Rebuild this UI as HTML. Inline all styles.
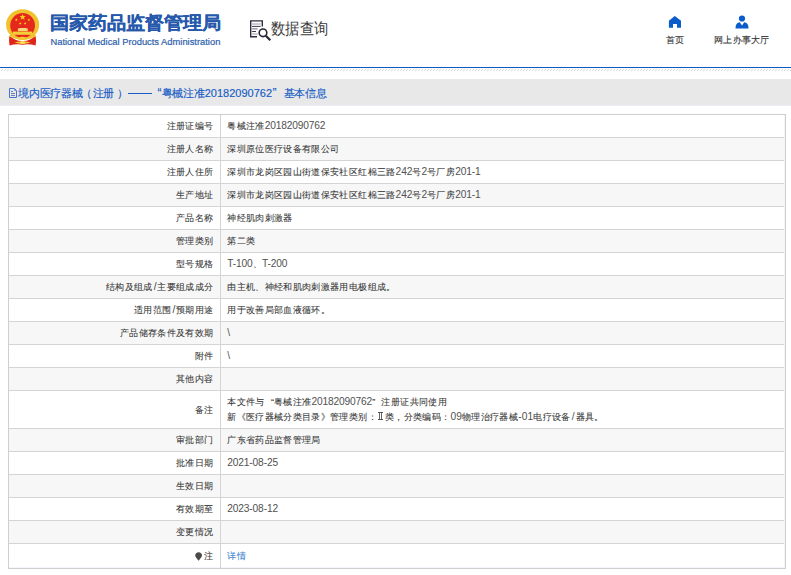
<!DOCTYPE html>
<html><head><meta charset="utf-8">
<style>
html,body{margin:0;padding:0;background:#fff;width:791px;height:575px;overflow:hidden;position:relative;font-family:"Liberation Sans",sans-serif;}
.abs{position:absolute;}
.emblem{position:absolute;left:0;top:0;}
.t1{position:absolute;left:50px;top:9px;font-size:19px;font-weight:bold;color:#2659ab;-webkit-text-stroke:0.2px #2659ab;white-space:nowrap;line-height:27px;transform:scale(1,0.94);transform-origin:0 22px}
.t2{position:absolute;left:50.5px;top:36px;font-size:9.35px;color:#2d5eac;white-space:nowrap;line-height:12px;-webkit-text-stroke:0.2px #2d5eac}
.sq{position:absolute;left:249px;top:19px;}
.t3{position:absolute;left:270.5px;top:17.5px;font-size:16px;color:#3c3c3c;white-space:nowrap;line-height:22px;transform:scale(0.895,1);transform-origin:0 0}
.nav{position:absolute;font-size:9px;color:#333;white-space:nowrap;line-height:12px;letter-spacing:0.3px;-webkit-text-stroke:0.1px #333}
.blue{position:absolute;left:0;top:67px;width:791px;height:1px;background:#0a5bc2}
.hatch{position:absolute;left:0;top:69px;width:791px;height:2px;background:repeating-linear-gradient(135deg,#e4e4e4 0 1px,#fff 1px 3px)}
.bar{position:absolute;left:0;top:79px;width:791px;height:26px;background:#e8e8e8;border-bottom:1px solid #eceef4}
.crumb{position:absolute;left:18px;top:83px;font-size:11px;color:#175cc6;white-space:nowrap;line-height:20px;-webkit-text-stroke:0.15px #175cc6}
.crumb .c{-webkit-text-stroke:0.15px #175cc6}
.crumb .c{font-size:11px;letter-spacing:-0.2px;color:#175cc6}
.doc{position:absolute;left:9px;top:88px;}
.tbl{position:absolute;left:8px;top:114px;width:778px;height:455px;box-sizing:border-box;border:1px solid #cfcfcf}
.row{position:absolute;left:9px;width:775px}
.hl{position:absolute;left:9px;width:775px;height:1px;background:#d4d4d4}
.vl{position:absolute;left:220px;top:115px;width:1px;height:453px;background:#d4d4d4}
.lab{position:absolute;left:9px;width:204.5px;text-align:right;font-size:10.2px;letter-spacing:-0.15px;color:#444;white-space:nowrap}
.val{position:absolute;left:227.3px;font-size:10.2px;letter-spacing:-0.15px;color:#505050;white-space:nowrap}
.c{font-size:9px;letter-spacing:0.35px;color:#333;-webkit-text-stroke:0.07px #444}
.link .c{color:#2d8cf0}
.link{color:#2d8cf0}
.sl{padding:0 0.9px 0 1.1px}
.r2{display:inline-block;width:5px;height:6px;border-top:1px solid #555;border-bottom:1px solid #555;background:linear-gradient(90deg,transparent 1px,#666 1px 2px,transparent 2px 3px,#666 3px 4px,transparent 4px);margin:0 2.2px 0 1px;vertical-align:0}
.ql{display:inline-block;width:9.35px;text-align:right;letter-spacing:0}
.qr{display:inline-block;width:9.35px;text-align:left;letter-spacing:0}
.pin{display:inline-block;width:6px;height:6px;background:#444;border-radius:50% 50% 50% 0;transform:rotate(-45deg);margin-right:2px;vertical-align:0px}
</style></head><body>
<svg class="emblem" width="46" height="50" viewBox="0 0 46 50">
<ellipse cx="22.6" cy="24.7" rx="16.5" ry="15.4" fill="#f0c22e"/>
<circle cx="22.6" cy="25.4" r="12.4" fill="#e4291c"/>
<path d="M9.4 35.8 Q8.6 41 9.6 45.6 Q16 43.6 22.6 44.8 Q29 43.6 35.6 45.6 Q36.6 41 35.6 35.8 Q29 41.5 22.6 41 Q16 41.5 9.4 35.8 Z" fill="#e0261b"/>
<path d="M22.65 13.9 L23.45 16.1 L25.8 16.15 L23.95 17.55 L24.6 19.8 L22.65 18.5 L20.7 19.8 L21.35 17.55 L19.5 16.15 L21.85 16.1 Z" fill="#f7d21a"/>
<path d="M16.4 18.3 L16.85 19.3 L17.8 19.35 L17.1 20 L17.3 21 L16.4 20.45 L15.5 21 L15.7 20 L15 19.35 L15.95 19.3 Z" fill="#f7d21a"/>
<path d="M28.9 18.4 L29.35 19.4 L30.3 19.45 L29.6 20.1 L29.8 21.1 L28.9 20.55 L28 21.1 L28.2 20.1 L27.5 19.45 L28.45 19.4 Z" fill="#f7d21a"/>
<path d="M20.2 21.9 L20.65 22.9 L21.6 22.95 L20.9 23.6 L21.1 24.6 L20.2 24.05 L19.3 24.6 L19.5 23.6 L18.8 22.95 L19.75 22.9 Z" fill="#f7d21a"/>
<path d="M25.1 21.9 L25.55 22.9 L26.5 22.95 L25.8 23.6 L26 24.6 L25.1 24.05 L24.2 24.6 L24.4 23.6 L23.7 22.95 L24.65 22.9 Z" fill="#f7d21a"/>
<path d="M17.9 28.4 H27.7 V31.2 H17.9 Z" fill="#f7d770"/>
<path d="M19.5 28 H26 V28.8 H19.5 Z" fill="#f9e6a0"/>
<path d="M13 31.6 H32.2 V34.8 H13 Z" fill="#f5cf3a"/>
<path d="M9.6 35.6 Q16 39.5 22.6 37.8 Q29 39.5 35.6 35.6" stroke="#f0c22e" stroke-width="1.8" fill="none"/>
<path d="M14.5 42.6 Q22.6 40 30.6 42.6 Q22.6 45.2 14.5 42.6 Z" fill="#f0c22e"/>
<ellipse cx="22.6" cy="42.6" rx="2.6" ry="1.5" fill="#f7da60"/>
<path d="M19 37.6 Q22.6 35.8 25.5 37.6 Q22.6 39.2 19 37.6 Z" fill="#f5cf3a"/>
</svg>
<div class="t1">国家药品监督管理局</div>
<div class="t2">National Medical Products Administration</div>
<svg class="sq" width="24" height="24" viewBox="0 0 24 24">
<path d="M13.3 7.5 V1.85 H1.7 V17.8 H8" stroke="#2e2e40" stroke-width="1.4" fill="none"/>
<path d="M3.1 5 H11.6" stroke="#9a9aa4" stroke-width="1"/>
<path d="M3.1 7.4 H11.6" stroke="#3a3a4a" stroke-width="1"/>
<path d="M3.1 9.9 H8.7" stroke="#6a6a78" stroke-width="1"/>
<path d="M3.1 12.5 H7" stroke="#3a3a4a" stroke-width="1"/>
<path d="M3.1 15 H8.7" stroke="#9a9aa4" stroke-width="1"/>
<circle cx="14" cy="13.8" r="3.8" stroke="#262636" stroke-width="1.6" fill="#fff"/>
<path d="M16.8 16.8 L21.3 21.3" stroke="#262636" stroke-width="2.2" stroke-linecap="butt"/>
</svg>
<div class="t3">数据查询</div>
<svg class="abs" style="left:668px;top:15px" width="14" height="13" viewBox="0 0 14 13">
<path d="M6.75 1 L13 5.8 V12.7 H9 V8.9 H5 V12.7 H0.9 V5.8 Z" fill="#0b5ccb"/>
</svg>
<div class="nav" style="left:666px;top:34px">首页</div>
<svg class="abs" style="left:735px;top:15px" width="14" height="14" viewBox="0 0 14 14">
<circle cx="7" cy="3.5" r="3.1" fill="#0b5ccb"/>
<path d="M0.5 13.4 Q0.5 7.6 4.8 7.3 L7 10.4 L9.2 7.3 Q13.5 7.6 13.5 13.4 Z" fill="#0b5ccb"/>
</svg>
<div class="nav" style="left:714px;top:34px">网上办事大厅</div>
<div class="blue"></div>
<svg class="abs" style="left:0;top:69px" width="791" height="2"><defs><pattern id="hp" width="3" height="2" patternUnits="userSpaceOnUse"><rect x="2" y="0" width="1" height="1" fill="#d9d9d9"/><rect x="1" y="1" width="1" height="1" fill="#d9d9d9"/></pattern></defs><rect width="791" height="2" fill="url(#hp)"/></svg>
<div class="bar"></div>
<svg class="abs" style="left:8px;top:87px" width="10" height="12" viewBox="0 0 10 12">
<path d="M1.5 1.5 H6.5 L8.5 3.5 V10.5 H1.5 Z" stroke="#4474d0" stroke-width="1" fill="none"/>
<path d="M6.5 1.5 V3.5 H8.5" stroke="#6a9ad8" stroke-width="1" fill="none"/>
<path d="M3 4.5 H5 M3 6.5 H7 M3 8.5 H7" stroke="#6d78c8" stroke-width="1"/>
</svg>
<div class="crumb" style="left:18px"><span class="c">境内医疗器械</span></div>
<div class="crumb" style="left:80.5px"><span class="c">（</span></div>
<div class="crumb" style="left:92.5px"><span class="c">注册</span></div>
<div class="crumb" style="left:117px"><span class="c">）</span></div>
<div class="abs" style="left:128px;top:93px;width:23.5px;height:1.1px;background:#175cc6"></div>
<div class="crumb" style="left:157.5px;font-size:12px">“</div>
<div class="crumb" style="left:161.5px"><span class="c">粤械注准</span>20182090762</div>
<div class="crumb" style="left:272.5px;font-size:12px">”</div>
<div class="crumb" style="left:283.5px"><span class="c">基本信息</span></div>
<div class="tbl"></div>
<div class="row" style="top:115px;height:22px;background:#fff"></div>
<div class="lab" style="top:114px;height:23px;line-height:23px"><span class="c">注册证编号</span></div>
<div class="val" style="top:114px;height:23px;line-height:23px"><span class="c">粤械注准</span>20182090762</div>
<div class="row" style="top:138px;height:22px;background:#f7f7f7"></div>
<div class="hl" style="top:137px"></div>
<div class="lab" style="top:137px;height:23px;line-height:23px"><span class="c">注册人名称</span></div>
<div class="val" style="top:137px;height:23px;line-height:23px"><span class="c">深圳原位医疗设备有限公司</span></div>
<div class="row" style="top:161px;height:22px;background:#fff"></div>
<div class="hl" style="top:160px"></div>
<div class="lab" style="top:160px;height:23px;line-height:23px"><span class="c">注册人住所</span></div>
<div class="val" style="top:160px;height:23px;line-height:23px"><span class="c">深圳市龙岗区园山街道保安社区红棉三路</span>242<span class="c">号</span>2<span class="c">号厂房</span>201-1</div>
<div class="row" style="top:184px;height:22px;background:#f7f7f7"></div>
<div class="hl" style="top:183px"></div>
<div class="lab" style="top:183px;height:23px;line-height:23px"><span class="c">生产地址</span></div>
<div class="val" style="top:183px;height:23px;line-height:23px"><span class="c">深圳市龙岗区园山街道保安社区红棉三路</span>242<span class="c">号</span>2<span class="c">号厂房</span>201-1</div>
<div class="row" style="top:207px;height:22px;background:#fff"></div>
<div class="hl" style="top:206px"></div>
<div class="lab" style="top:206px;height:23px;line-height:23px"><span class="c">产品名称</span></div>
<div class="val" style="top:206px;height:23px;line-height:23px"><span class="c">神经肌肉刺激器</span></div>
<div class="row" style="top:230px;height:22px;background:#f7f7f7"></div>
<div class="hl" style="top:229px"></div>
<div class="lab" style="top:229px;height:23px;line-height:23px"><span class="c">管理类别</span></div>
<div class="val" style="top:229px;height:23px;line-height:23px"><span class="c">第二类</span></div>
<div class="row" style="top:253px;height:22px;background:#fff"></div>
<div class="hl" style="top:252px"></div>
<div class="lab" style="top:252px;height:23px;line-height:23px"><span class="c">型号规格</span></div>
<div class="val" style="top:252px;height:23px;line-height:23px">T-100<span class="c">、</span>T-200</div>
<div class="row" style="top:276px;height:22px;background:#f7f7f7"></div>
<div class="hl" style="top:275px"></div>
<div class="lab" style="top:275px;height:23px;line-height:23px"><span class="c">结构及组成</span><span class="sl">/</span><span class="c">主要组成成分</span></div>
<div class="val" style="top:275px;height:23px;line-height:23px"><span class="c">由主机、神经和肌肉刺激器用电极组成。</span></div>
<div class="row" style="top:299px;height:22px;background:#fff"></div>
<div class="hl" style="top:298px"></div>
<div class="lab" style="top:298px;height:23px;line-height:23px"><span class="c">适用范围</span><span class="sl">/</span><span class="c">预期用途</span></div>
<div class="val" style="top:298px;height:23px;line-height:23px"><span class="c">用于改善局部血液循环。</span></div>
<div class="row" style="top:322px;height:22px;background:#f7f7f7"></div>
<div class="hl" style="top:321px"></div>
<div class="lab" style="top:321px;height:23px;line-height:23px"><span class="c">产品储存条件及有效期</span></div>
<div class="val" style="top:321px;height:23px;line-height:23px">\</div>
<div class="row" style="top:345px;height:22px;background:#fff"></div>
<div class="hl" style="top:344px"></div>
<div class="lab" style="top:344px;height:23px;line-height:23px"><span class="c">附件</span></div>
<div class="val" style="top:344px;height:23px;line-height:23px">\</div>
<div class="row" style="top:368px;height:22px;background:#f7f7f7"></div>
<div class="hl" style="top:367px"></div>
<div class="lab" style="top:367px;height:23px;line-height:23px"><span class="c">其他内容</span></div>
<div class="val" style="top:367px;height:23px;line-height:23px"></div>
<div class="row" style="top:391px;height:37px;background:#fff"></div>
<div class="hl" style="top:390px"></div>
<div class="lab" style="top:391px;height:38px;line-height:38px"><span class="c">备注</span></div>
<div class="val" style="top:393.5px;line-height:15px"><span class="c">本文件与<span class="ql">“</span>粤械注准</span>20182090762<span class="c"><span class="qr">”</span>注册证共同使用</span></div>
<div class="val" style="top:409px;line-height:15px;letter-spacing:0.1px"><span class="c">新《医疗器械分类目录》管理类别：</span><span class="r2"></span><span class="c">类，分类编码：</span>09<span class="c">物理治疗器械</span>-01<span class="c">电疗设备</span><span class="sl">/</span><span class="c">器具。</span></div>
<div class="row" style="top:429px;height:22px;background:#f7f7f7"></div>
<div class="hl" style="top:428px"></div>
<div class="lab" style="top:428px;height:23px;line-height:23px"><span class="c">审批部门</span></div>
<div class="val" style="top:428px;height:23px;line-height:23px"><span class="c">广东省药品监督管理局</span></div>
<div class="row" style="top:452px;height:22px;background:#fff"></div>
<div class="hl" style="top:451px"></div>
<div class="lab" style="top:451px;height:23px;line-height:23px"><span class="c">批准日期</span></div>
<div class="val" style="top:451px;height:23px;line-height:23px">2021-08-25</div>
<div class="row" style="top:475px;height:22px;background:#f7f7f7"></div>
<div class="hl" style="top:474px"></div>
<div class="lab" style="top:474px;height:23px;line-height:23px"><span class="c">生效日期</span></div>
<div class="val" style="top:474px;height:23px;line-height:23px"></div>
<div class="row" style="top:498px;height:22px;background:#fff"></div>
<div class="hl" style="top:497px"></div>
<div class="lab" style="top:497px;height:23px;line-height:23px"><span class="c">有效期至</span></div>
<div class="val" style="top:497px;height:23px;line-height:23px">2023-08-12</div>
<div class="row" style="top:521px;height:22px;background:#f7f7f7"></div>
<div class="hl" style="top:520px"></div>
<div class="lab" style="top:520px;height:23px;line-height:23px"><span class="c">变更情况</span></div>
<div class="val" style="top:520px;height:23px;line-height:23px"></div>
<div class="row" style="top:544px;height:24px;background:#fff"></div>
<div class="hl" style="top:543px"></div>
<svg class="abs" style="left:194.5px;top:551.5px" width="8" height="9" viewBox="0 0 8 9"><path d="M3.6 0.3 C5.6 0.3 7 1.7 7 3.6 C7 5.6 4.8 6.6 3.9 8.6 L3.3 8.6 C2.4 6.6 0.2 5.6 0.2 3.6 C0.2 1.7 1.6 0.3 3.6 0.3 Z" fill="#4a4a4a"/></svg>
<div class="lab" style="top:543px;height:25px;line-height:25px"><span class="c">注</span></div>
<div class="val link" style="top:543px;height:25px;line-height:25px"><span class="c">详情</span></div>
<div class="vl"></div>
<div class="abs" style="left:784px;top:115px;width:1px;height:453px;background:rgba(190,200,240,0.18)"></div>
<div class="abs" style="left:9px;top:567px;width:776px;height:1px;background:rgba(190,200,240,0.18)"></div>
</body></html>
